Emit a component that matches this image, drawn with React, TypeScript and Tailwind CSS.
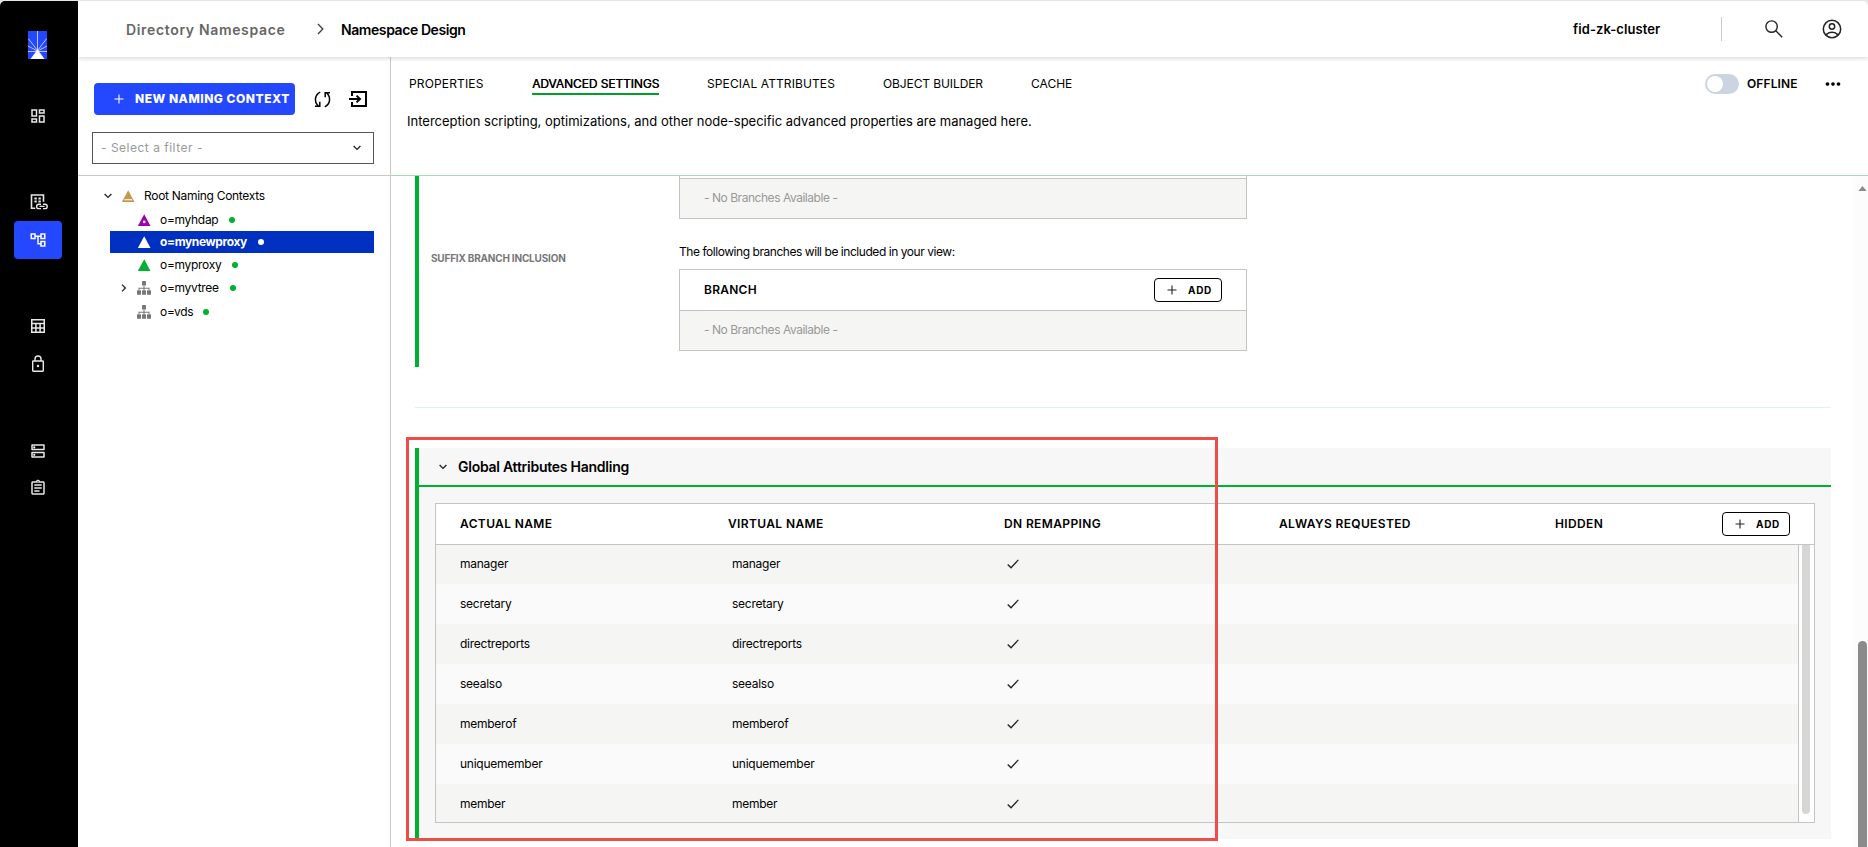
import React from "react";
import {
  MdOutlineDashboard,
  MdOutlineAccountTree,
  MdOutlineDns,
  MdOutlineAssignment,
  MdMoreHoriz,
} from "react-icons/md";

const attributes = ["manager", "secretary", "directreports", "seealso", "memberof", "uniquemember", "member"];

function Chevron({ className = "" }: { className?: string }) {
  return (
    <svg viewBox="0 0 8 6" className={`h-[6px] w-[8px] shrink-0 ${className}`} fill="none" stroke="#222" strokeWidth="1.3">
      <path d="M0.6 1 4 4.4 7.4 1" />
    </svg>
  );
}

function Plus({ className = "" }: { className?: string }) {
  return (
    <svg viewBox="0 0 10 10" className={`h-[10px] w-[10px] shrink-0 ${className}`} fill="none" stroke="currentColor" strokeWidth="1.1">
      <path d="M5 0.5v9M0.5 5h9" />
    </svg>
  );
}

function Logo() {
  return (
    <svg viewBox="0 0 19 28" className="h-[28px] w-[19px]">
      <rect width="19" height="28" fill="#2348ff" />
      <g stroke="#dfe5ff" strokeWidth="0.8">
        <path d="M9.5 0v19M0.3 7.500l9.200 12M18.700 7.500l-9.200 12M0 15l9.5 5M19 15l-9.5 5M0 20.500h19" />
      </g>
      <path d="M9.5 18.500 16.500 28H2.500z" fill="#fff" />
    </svg>
  );
}

function BuildingLink() {
  return (
    <svg viewBox="0 0 18 16" className="h-[16px] w-[18px]" fill="none" stroke="currentColor" strokeWidth="1.6">
      <path d="M1.500 14.500V1h12v6.800M0.700 14.200H5.200" />
      <path d="M4.400 4.500h2.400M8.400 4.500h2.400M4.400 7.600h2.400M8.400 7.600h2.400" strokeWidth="2" />
      <path d="M11 10.200H8.800a2.200 2.200 0 0 0 0 4.400H11M13 10.200h2a2.200 2.200 0 0 1 0 4.400h-2M9.500 12.400h5" strokeWidth="1.400" />
    </svg>
  );
}

function TableGrid() {
  return (
    <svg viewBox="0 0 14 14" className="h-[14px] w-[14px]" fill="none" stroke="currentColor" strokeWidth="1.5">
      <path d="M0.750 0.750h12.500v12.500H0.750zM0.750 4.500h12.500M0.750 8.900h12.500M4.900 4.500v8.700M9.100 4.500v8.700" />
    </svg>
  );
}

function Padlock() {
  return (
    <svg viewBox="0 0 12 17" className="h-[17px] w-[12px]" fill="none" stroke="currentColor" strokeWidth="1.4">
      <rect x="0.700" y="6" width="10.600" height="10.200" rx="0.600" />
      <path d="M3 6V4a3 3 0 0 1 6 0v2" />
      <circle cx="6" cy="11" r="1.200" fill="currentColor" stroke="none" />
    </svg>
  );
}

function Refresh() {
  return (
    <svg viewBox="0 0 17 17" className="h-[17px] w-[17px]" fill="none" stroke="#000" strokeWidth="1.5">
      <path d="M6.200 1.200C0.800 4 -0.300 10.500 4.300 15M1 15.300h4.800v-4.600" />
      <path d="M10.800 15.800C16.200 13 17.300 6.500 12.700 2M16 1.700h-4.800v4.600" />
    </svg>
  );
}

function EnterBox() {
  return (
    <svg viewBox="0 0 18 16" className="h-[16px] w-[18px]" fill="none" stroke="#000" strokeWidth="2">
      <path d="M3 5V1h14v14H3v-4M0 8h10" />
      <path d="M7.500 4.600 11 8l-3.500 3.400" />
    </svg>
  );
}

function SearchGlass() {
  return (
    <svg viewBox="0 0 18 18" className="h-[18px] w-[18px]" fill="none" stroke="#222" strokeWidth="1.4">
      <circle cx="6.600" cy="6.600" r="5.700" />
      <path d="M10.800 10.800l6.400 6.400" />
    </svg>
  );
}

function UserCircle() {
  return (
    <svg viewBox="0 0 20 20" className="h-[20px] w-[20px]" fill="none" stroke="#222" strokeWidth="1.5">
      <circle cx="10" cy="10" r="8.700" />
      <circle cx="10" cy="7.500" r="2.700" />
      <path d="M4 16c1.600-1.900 3.700-2.700 6-2.700s4.400 0.800 6 2.700" />
    </svg>
  );
}

function Sitemap() {
  return (
    <svg viewBox="0 0 14 14" className="h-[14px] w-[14px] shrink-0" fill="#777">
      <rect x="5" y="0" width="4" height="4.500" rx="0.500" />
      <path d="M6.500 4.500h1v2.300h5v2.500h-1V7.800H7.500v1.500h-1V7.800h-4v1.500h-1V6.800h5z" />
      <rect x="0" y="9.300" width="4" height="4.500" rx="0.500" />
      <rect x="5" y="9.300" width="4" height="4.500" rx="0.500" />
      <rect x="10" y="9.300" width="4" height="4.500" rx="0.500" />
    </svg>
  );
}

function Dot({ color = "bg-[#00b02f]" }: { color?: string }) {
  return <span className={`h-[6px] w-[6px] shrink-0 rounded-full ${color}`} />;
}

function Triangle({ fill, inner }: { fill: string; inner?: "dot" | "bar" }) {
  return (
    <svg viewBox="0 0 13 12" className="h-[12px] w-[13px] shrink-0">
      <path d="M6.200 0.200 12.500 12H-0.100z" fill={fill} />
      {inner === "dot" && <circle cx="6.200" cy="7.900" r="1.400" fill="#fff" />}
      {inner === "bar" && <path d="M2.400 9.700h7.700" stroke="#fff" strokeWidth="1.100" />}
    </svg>
  );
}

function AddButton() {
  return (
    <button className="flex h-[24px] w-[68px] items-center rounded-[4px] border border-black bg-white pl-[12px]">
      <Plus className="text-[#222]" />
      <span className="ml-[11px] text-[10px] font-bold tracking-[0.700px]">ADD</span>
    </button>
  );
}

function SideRail() {
  return (
    <nav className="flex w-[78px] shrink-0 flex-col items-center bg-black pr-[2px] text-[#e8e8e8]">
      <div className="mt-[30px] h-[28px] pr-px"><Logo /></div>
      <div className="mt-[48px] h-[18px]"><MdOutlineDashboard size={18} /></div>
      <div className="mt-[69px] h-[16px] pl-[2px]"><BuildingLink /></div>
      <div className="mt-[11px] flex h-[38px] w-[48px] items-center justify-center rounded-[4px] bg-[#2348ff] text-white">
        <MdOutlineAccountTree size={18} />
      </div>
      <div className="mt-[60px] h-[14px]"><TableGrid /></div>
      <div className="mt-[22px] h-[17px]"><Padlock /></div>
      <div className="mt-[70px] h-[18px]"><MdOutlineDns size={18} /></div>
      <div className="mt-[19px] h-[18px]"><MdOutlineAssignment size={18} /></div>
    </nav>
  );
}

function Header() {
  return (
    <header className="relative z-10 flex h-[56px] shrink-0 items-center bg-white shadow-[0_1px_5px_rgba(0,0,0,0.18)]">
      <span className="ml-[48px] w-[191px] text-[14px] font-semibold tracking-[0.660px] text-[#666]">Directory Namespace</span>
      <svg viewBox="0 0 7 12" className="h-[12px] w-[7px]" fill="none" stroke="#444" strokeWidth="1.4">
        <path d="M1 1l4.800 5L1 11" />
      </svg>
      <span className="ml-[17px] text-[14px] font-semibold tracking-[-0.420px]">Namespace Design</span>
      <div className="ml-auto flex items-center">
        <span className="w-[148px] pt-[2px] text-[13px] font-semibold tracking-[0.080px]">fid-zk-cluster</span>
        <span className="mr-[43px] h-[24px] w-px bg-[#ccc]" />
        <span className="mr-[39px]"><SearchGlass /></span>
        <span className="mr-[26px]"><UserCircle /></span>
      </div>
    </header>
  );
}

function TreePanel() {
  return (
    <section className="flex w-[313px] shrink-0 flex-col border-r border-[#c8c8c8]">
      <div className="h-[119px] border-b border-[#c8c8c8] pt-[26px]">
        <div className="ml-[16px] flex items-center">
          <button className="flex h-[32px] w-[201px] items-center rounded-[4px] bg-[#2348ff] pl-[20px] text-white">
            <Plus />
            <span className="ml-[11px] whitespace-nowrap text-[12px] font-extrabold tracking-[0.520px]">NEW NAMING CONTEXT</span>
          </button>
          <span className="ml-[19px]"><Refresh /></span>
          <span className="ml-[18px]"><EnterBox /></span>
        </div>
        <div className="ml-[14px] mt-[17px] flex h-[32px] w-[282px] items-center justify-between border border-[#555] pl-[8px] pr-[12px]">
          <span className="text-[12px] tracking-[0.500px] text-[#999]">- Select a filter -</span>
          <Chevron />
        </div>
      </div>
      <div className="flex flex-col pt-[8px] text-[12px] tracking-[-0.300px]">
        <div className="flex h-[24px] items-center pl-[26px]">
          <Chevron />
          <span className="ml-[10px]"><Triangle fill="#c49a4c" inner="bar" /></span>
          <span className="ml-[9px]">Root Naming Contexts</span>
        </div>
        <div className="flex h-[23px] items-center pl-[60px] pt-px">
          <Triangle fill="#9c00b0" inner="dot" />
          <span className="ml-[9px] mr-[11px]">o=myhdap</span>
          <Dot />
        </div>
        <div className="ml-[32px] mr-[16px] flex h-[22px] items-center bg-[#0030c0] pl-[28px] font-bold tracking-[-0.400px] text-white">
          <Triangle fill="#fff" />
          <span className="ml-[9px] mr-[11px]">o=mynewproxy</span>
          <Dot color="bg-white" />
        </div>
        <div className="flex h-[23px] items-center pl-[60px] pt-px">
          <Triangle fill="#00b02f" />
          <span className="ml-[9px] mr-[11px]">o=myproxy</span>
          <Dot />
        </div>
        <div className="flex h-[23px] items-center pl-[42px] pt-px">
          <Chevron className="mr-[9px] -rotate-90" />
          <Sitemap />
          <span className="ml-[9px] mr-[11px]">o=myvtree</span>
          <Dot />
        </div>
        <div className="flex h-[25px] items-center pl-[59px] pt-px">
          <Sitemap />
          <span className="ml-[9px] mr-[10px]">o=vds</span>
          <Dot />
        </div>
      </div>
    </section>
  );
}

function TabBar() {
  return (
    <div className="h-[119px] shrink-0 border-b border-[#a6dcb2] pt-[16px]">
      <div className="flex h-[22px] items-center pl-[18px] text-[12px]">
        <span className="w-[123px] tracking-[0.150px]">PROPERTIES</span>
        <span className="w-[175px] tracking-[-0.090px] [text-shadow:0.400px_0_0_#000]">
          <span className="inline-block border-b-2 border-[#00a02b] leading-[19px]">ADVANCED SETTINGS</span>
        </span>
        <span className="w-[176px] tracking-[0.100px]">SPECIAL ATTRIBUTES</span>
        <span className="w-[148px] tracking-[-0.100px]">OBJECT BUILDER</span>
        <span>CACHE</span>
        <span className="ml-auto flex h-[20px] w-[34px] items-center rounded-full bg-[#cbd5e1] pl-[2px]">
          <span className="h-[16px] w-[16px] rounded-full bg-white" />
        </span>
        <span className="ml-[8px] w-[75px] font-semibold tracking-[0.100px]">OFFLINE</span>
        <MdMoreHoriz size={22} className="mr-[24px]" />
      </div>
      <p className="mt-[16px] pl-[16px] text-[13px] leading-[20px]">
        Interception scripting, optimizations, and other node-specific advanced properties are managed here.
      </p>
    </div>
  );
}

function EmptyRow() {
  return (
    <div className="flex h-[40px] items-center border-t border-[#c4c4c4] bg-[#f5f5f4] pb-[2px] pl-[24px] tracking-[-0.460px] text-[#999]">
      - No Branches Available -
    </div>
  );
}

function BranchSection() {
  return (
    <section className="flex h-[191px] w-[1416px] shrink-0 border-l-4 border-[#00b02f]">
      <div className="w-[260px] pl-[12px] pt-[75px] text-[10px] font-bold leading-[14px] tracking-[-0.200px] text-[#777]">SUFFIX BRANCH INCLUSION</div>
      <div className="w-[568px] text-[12px]">
        <div className="h-[43px] border-x border-b border-[#c4c4c4]">
          <div className="h-[2px]" />
          <EmptyRow />
        </div>
        <p className="mt-[24px] h-[26px] leading-[18px] tracking-[-0.450px]">The following branches will be included in your view:</p>
        <div className="border border-[#c4c4c4]">
          <div className="flex h-[40px] items-center justify-between pl-[24px] pr-[24px]">
            <span className="font-semibold tracking-[0.250px]">BRANCH</span>
            <AddButton />
          </div>
          <EmptyRow />
        </div>
      </div>
    </section>
  );
}

function GlobalAttributes() {
  return (
    <section className="relative mt-[40px] h-[391px] w-[1416px] shrink-0 border-l-4 border-[#00b02f] bg-[#f7f7f7]">
      <div className="flex h-[39px] items-center border-b-2 border-[#00b02f] pl-[20px]">
        <Chevron />
        <span className="ml-[11px] text-[14px] font-semibold tracking-[-0.250px]">Global Attributes Handling</span>
      </div>
      <div className="ml-[16px] mt-[16px] h-[320px] w-[1380px] overflow-hidden border border-[#c4c4c4] bg-white">
        <div className="flex h-[41px] items-center border-b border-[#c4c4c4] pl-[24px] pr-[24px] text-[12px] font-semibold tracking-[0.370px]">
          <span className="w-[268px]">ACTUAL NAME</span>
          <span className="w-[276px]">VIRTUAL NAME</span>
          <span className="w-[275px]">DN REMAPPING</span>
          <span className="w-[276px]">ALWAYS REQUESTED</span>
          <span className="mr-auto">HIDDEN</span>
          <AddButton />
        </div>
        <div className="flex">
          <div className="w-[1363px] border-r border-[#c4c4c4] text-[12px] tracking-[-0.250px]">
            {attributes.map((name, i) => (
              <div
                key={name}
                className={`flex items-center pl-[24px] ${i === 0 ? "h-[39px] pb-[2px]" : "h-[40px] pb-px"} ${i % 2 ? "bg-[#fafafa]" : "bg-[#f5f5f3]"}`}
              >
                <span className="w-[272px]">{name}</span>
                <span className="w-[275px]">{name}</span>
                <svg viewBox="0 0 12 10" className="h-[10px] w-[12px]" fill="none" stroke="#222" strokeWidth="1.3">
                  <path d="M0.700 5.500 4 8.700 11.300 0.900" />
                </svg>
              </div>
            ))}
          </div>
          <div className="ml-[3px] h-[269px] w-[8px] rounded-b-full rounded-t-[4px] bg-[#d6d6d6]" />
        </div>
      </div>
      <div className="absolute -left-[13px] -top-[11px] h-[404px] w-[812px] border-[3px] border-[#ec4d47]" />
    </section>
  );
}

export default function App() {
  return (
    <div className="h-[847px] w-[1868px] overflow-hidden bg-[#e4e4e4] pt-px font-['Inter','Liberation_Sans',sans-serif] text-black">
      <div className="flex h-[846px] overflow-hidden rounded-t-[5px] bg-white">
        <SideRail />
        <div className="flex min-w-0 flex-1 flex-col">
          <Header />
          <div className="flex min-h-0 flex-1">
            <TreePanel />
            <main className="flex min-w-0 flex-1 flex-col">
              <TabBar />
              <div className="flex min-h-0 flex-1">
                <div className="flex min-w-0 flex-1 flex-col pl-[24px]">
                  <BranchSection />
                  <div className="mt-[40px] h-px w-[1416px] shrink-0 bg-[#e3f2ea]" />
                  <GlobalAttributes />
                </div>
                <div className="flex w-[14px] flex-col items-center bg-[#fcfcfc] pl-[3px]">
                  <svg viewBox="0 0 10 6" className="mt-[10px] h-[5px] w-[9px] shrink-0">
                    <path d="M5 0l5 6H0z" fill="#8b8b8b" />
                  </svg>
                  <div className="mt-[450px] w-[9px] flex-1 rounded-t-full bg-[#8b8b8b]" />
                </div>
              </div>
            </main>
          </div>
        </div>
      </div>
    </div>
  );
}
